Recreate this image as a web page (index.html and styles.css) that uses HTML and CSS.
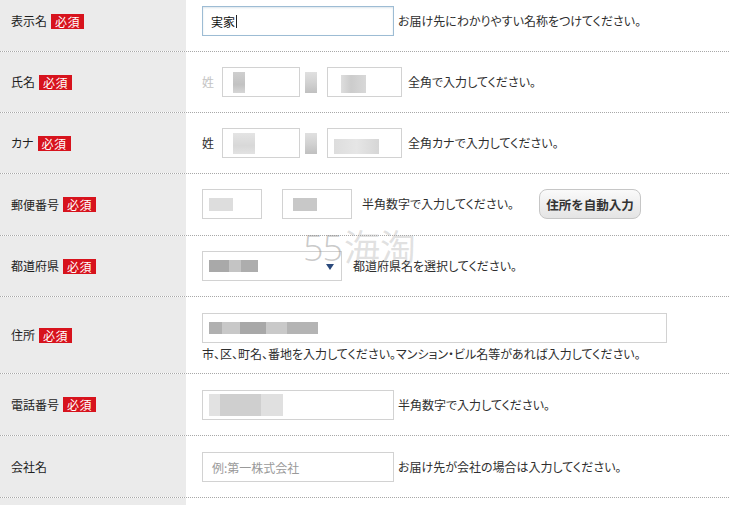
FILE: index.html
```html
<!DOCTYPE html>
<html lang="ja">
<head>
<meta charset="utf-8">
<title>お届け先登録</title>
<link rel="stylesheet" href="styles.css">
</head>
<body>
<div class="form">
  <div class="row">
    <div class="label">表示名<span class="req">必須</span></div>
    <div class="value">
      <div class="field field-md focus"><span class="typed">実家</span><span class="caret"></span></div>
      <span class="help">お届け先にわかりやすい名称をつけてください。</span>
    </div>
  </div>

  <div class="row">
    <div class="label">氏名<span class="req">必須</span></div>
    <div class="value">
      <span class="pre pre-blur">姓</span>
      <div class="field field-sei"><span class="mz mz-a"></span></div>
      <span class="mid"><span class="mz mz-b"></span></span>
      <div class="field field-mei"><span class="mz mz-c"></span></div>
      <span class="help help-name">全角で入力してください。</span>
    </div>
  </div>

  <div class="row">
    <div class="label">カナ<span class="req">必須</span></div>
    <div class="value">
      <span class="pre">姓</span>
      <div class="field field-sei"><span class="mz mz-d"></span></div>
      <span class="mid"><span class="mz mz-b"></span></span>
      <div class="field field-mei"><span class="mz mz-e"></span></div>
      <span class="help help-name">全角カナで入力してください。</span>
    </div>
  </div>

  <div class="row">
    <div class="label">郵便番号<span class="req">必須</span></div>
    <div class="value value-b16">
      <div class="field field-zip1"><span class="mz mz-f"></span></div>
      <div class="field field-zip2"><span class="mz mz-g"></span></div>
      <span class="help help-zip">半角数字で入力してください。</span>
      <button class="btn" type="button">住所を自動入力</button>
    </div>
  </div>

  <div class="row">
    <div class="label">都道府県<span class="req">必須</span></div>
    <div class="value">
      <div class="field select"><span class="mz mz-h"></span><span class="arrow"></span></div>
      <span class="help help-sel">都道府県名を選択してください。</span>
      <div class="watermark"><span class="wm-num">55</span><span class="wm-cjk">海淘</span></div>
    </div>
  </div>

  <div class="row">
    <div class="label">住所<span class="req">必須</span></div>
    <div class="value value-col">
      <div class="field field-lg"><span class="mz mz-i"></span></div>
      <span class="help help-below">市、区、町名、番地を入力してください。マンション・ビル名等があれば入力してください。</span>
    </div>
  </div>

  <div class="row">
    <div class="label">電話番号<span class="req">必須</span></div>
    <div class="value value-t16">
      <div class="field field-md"><span class="mz mz-j"></span></div>
      <span class="help">半角数字で入力してください。</span>
    </div>
  </div>

  <div class="row">
    <div class="label">会社名</div>
    <div class="value value-t16">
      <div class="field field-md"><span class="placeholder">例:第一株式会社</span></div>
      <span class="help">お届け先が会社の場合は入力してください。</span>
    </div>
  </div>

  <div class="row">
    <div class="label"></div>
    <div class="value"></div>
  </div>
</div>
</body>
</html>
```

FILE: styles.css
```css
* { box-sizing: border-box; }
html, body {
  margin: 0;
  padding: 0;
  background: #ffffff;
  overflow: hidden;
}
body {
  font-family: "Noto Sans CJK JP", "Noto Sans", sans-serif;
  font-size: 12px;
  color: #2e2e2e;
  font-feature-settings: "palt";
}
.form {
  margin-top: -9px;
  width: 729px;
}
.row {
  display: flex;
  border-bottom: 1px dotted #a8a8a8;
}
.label {
  width: 186px;
  flex: 0 0 186px;
  background: #ebebeb;
  display: flex;
  align-items: center;
  padding-left: 11px;
  color: #1e1e1e;
  font-size: 12px;
  line-height: 16px;
}
.req {
  display: inline-block;
  margin-left: 4px;
  background: #d7131d;
  color: #ffffff;
  font-size: 12px;
  line-height: 15px;
  height: 15px;
  padding: 0 4px;
  letter-spacing: 0.5px;
}
.value {
  flex: 1;
  display: flex;
  align-items: center;
  padding: 15px 0 15px 16px;
  position: relative;
}
.value-b16 { padding-bottom: 16px; }
.value-t16 { padding-top: 16px; }
.value-col {
  flex-direction: column;
  align-items: flex-start;
  padding-top: 16px;
  padding-bottom: 11px;
}
.field {
  height: 30px;
  border: 1px solid #d2d2d2;
  background: #ffffff;
  display: flex;
  align-items: center;
  padding-left: 6px;
  flex: 0 0 auto;
  position: relative;
}
.field-md { width: 192px; }
.field-sei { width: 78px; }
.field-mei { width: 75px; }
.field-zip1 { width: 60px; }
.field-zip2 { width: 70px; margin-left: 20px; }
.field-lg { width: 465px; }
.focus {
  border-color: #9dbcd4;
  box-shadow: inset 0 1px 2px rgba(120, 150, 180, 0.25);
  padding-left: 8px;
  color: #111111;
}
.typed { font-size: 12px; }
.caret {
  display: inline-block;
  width: 1px;
  height: 13px;
  background: #222222;
  margin-left: 1px;
}
.placeholder {
  color: #9a9a9a;
  padding-left: 3px;
}
.help {
  margin-left: 4px;
  line-height: 16px;
  white-space: nowrap;
}
.help-name { margin-left: 6px; }
.help-zip { margin-left: 10px; }
.help-sel { margin-left: 11px; }
.help-below {
  margin-left: 0;
  margin-top: 3px;
}
.pre {
  width: 20px;
  flex: 0 0 20px;
  line-height: 16px;
}
.pre-blur { color: #c4c4c4; }
.mid {
  width: 27px;
  flex: 0 0 27px;
  display: flex;
  padding-left: 5px;
}
.mz {
  display: block;
  height: 21px;
}
.mz-a { width: 12px; margin-left: 4px; background: linear-gradient(#cfcfcf, #c2c2c2 60%, #d6d6d6); }
.mz-b { width: 12px; background: linear-gradient(#e0e0e0, #d2d2d2 50%, #c0c0c0); }
.mz-c { width: 25px; margin-left: 7px; height: 18px; margin-top: 3px; background: linear-gradient(90deg, #dedede, #cccccc 40%, #d8d8d8); }
.mz-d { width: 22px; margin-left: 4px; background: linear-gradient(#e4e4e4, #d8d8d8 60%, #e2e2e2); }
.mz-e { width: 45px; height: 15px; margin-top: 6px; background: linear-gradient(90deg, #dddddd, #e6e6e6 50%, #d6d6d6); }
.mz-f { width: 24px; height: 13px; background: #dddddd; }
.mz-g { width: 24px; height: 13px; margin-left: 4px; background: #c8c8c8; }
.mz-h {
  width: 49px;
  height: 12px;
  background: linear-gradient(90deg, #a9a9a9 0 40%, #c4c4c4 40% 65%, #adadad 65%);
}
.mz-i {
  width: 109px;
  height: 12px;
  background: linear-gradient(90deg, #b0b0b0 0 12%, #c8c8c8 12% 28%, #a8a8a8 28% 52%, #c9c9c9 52% 72%, #b4b4b4 72%);
}
.mz-j {
  width: 74px;
  height: 22px;
  background: linear-gradient(90deg, #e2e2e2 0 15%, #cfcfcf 15% 70%, #e0e0e0 70%);
}
.select { width: 140px; }
.arrow {
  position: absolute;
  right: 7px;
  top: 12px;
  width: 0;
  height: 0;
  border-left: 4px solid transparent;
  border-right: 4px solid transparent;
  border-top: 6px solid #2b4a7c;
}
.btn {
  margin-left: 25px;
  width: 102px;
  height: 30px;
  border: 1px solid #c6c6c6;
  border-radius: 8px;
  background: linear-gradient(#fafafa, #e4e4e4);
  font-family: "Noto Sans CJK JP", "Noto Sans", sans-serif;
  font-size: 12.5px;
  font-weight: bold;
  color: #333333;
  padding: 0;
  font-feature-settings: normal;
}
.watermark {
  position: absolute;
  left: 117px;
  top: -2px;
  line-height: 22px;
  height: 22px;
  pointer-events: none;
  white-space: nowrap;
}
.wm-num {
  color: rgba(150, 150, 150, 0.5);
  font-family: "Open Sans", "DejaVu Sans", sans-serif;
  font-size: 36px;
  font-weight: 300;
  letter-spacing: -1px;
}
.wm-cjk {
  color: rgba(170, 170, 170, 0.35);
  font-family: "Noto Sans CJK SC", sans-serif;
  font-size: 36px;
  margin-left: 2px;
}
```
